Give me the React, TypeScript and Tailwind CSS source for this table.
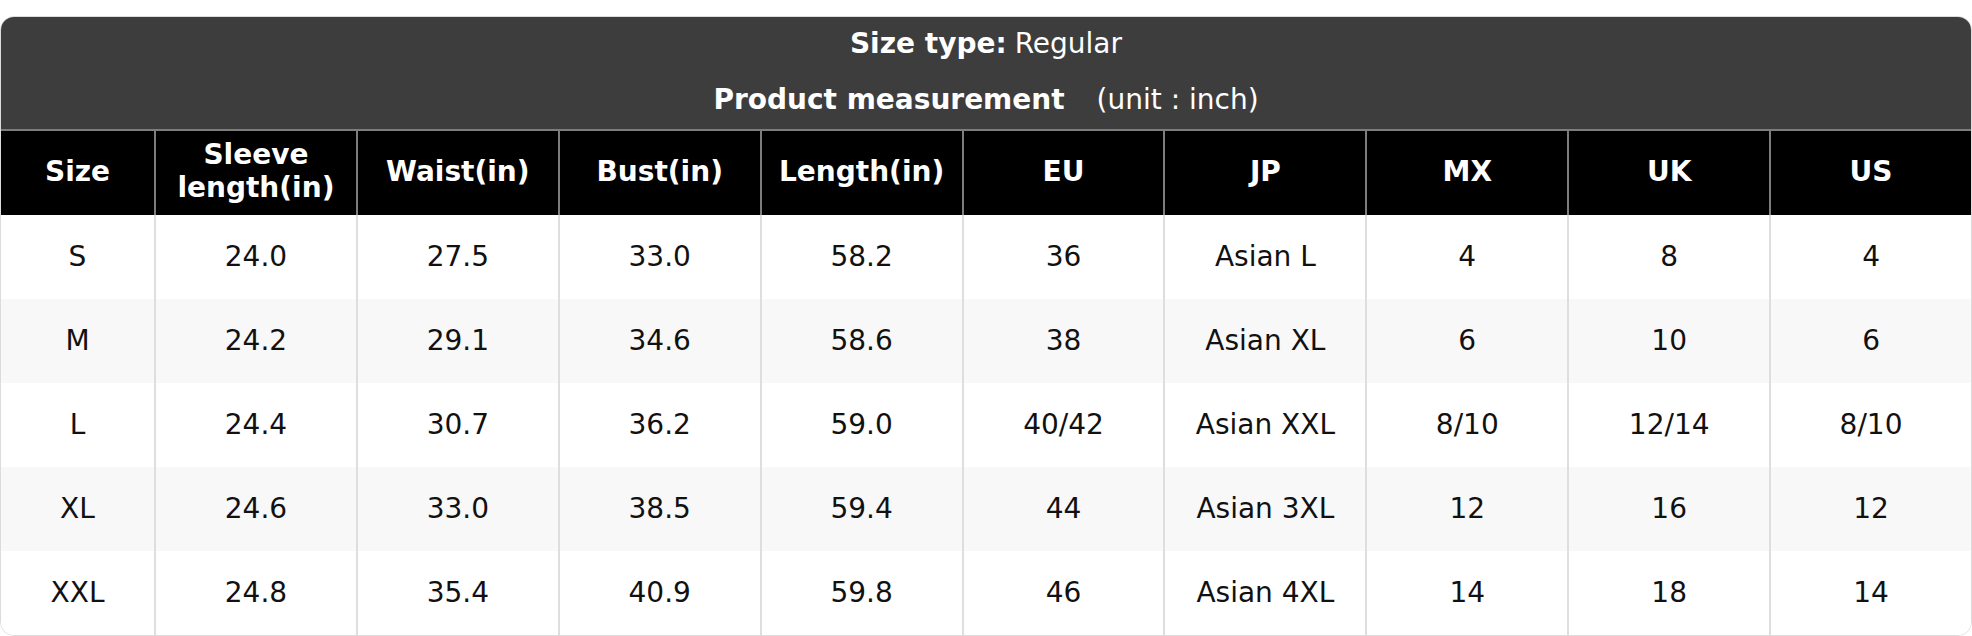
const columns = ['Size', 'Sleeve length(in)', 'Waist(in)', 'Bust(in)', 'Length(in)', 'EU', 'JP', 'MX', 'UK', 'US']

const rows: string[][] = [
  ['S', '24.0', '27.5', '33.0', '58.2', '36', 'Asian L', '4', '8', '4'],
  ['M', '24.2', '29.1', '34.6', '58.6', '38', 'Asian XL', '6', '10', '6'],
  ['L', '24.4', '30.7', '36.2', '59.0', '40/42', 'Asian XXL', '8/10', '12/14', '8/10'],
  ['XL', '24.6', '33.0', '38.5', '59.4', '44', 'Asian 3XL', '12', '16', '12'],
  ['XXL', '24.8', '35.4', '40.9', '59.8', '46', 'Asian 4XL', '14', '18', '14']
]

export default function App() {
  return (
    <div className="min-h-screen bg-white pt-4 font-['DejaVu_Sans',sans-serif]">
      <div className="rounded-[14px] border border-[#dcdcdc] overflow-hidden">
        {/* Title */}
        <div className="bg-[#3d3d3d] text-white text-[28px] h-[112px] flex flex-col items-center">
          <div className="h-[54px] flex items-center">
            <span className="font-bold">Size type:</span>
            <span className="ml-2">Regular</span>
          </div>
          <div className="h-[58px] flex items-center">
            <span className="font-bold">Product measurement</span>
            <span className="ml-8">(unit : inch)</span>
          </div>
        </div>

        {/* Column headers */}
        <div className="grid grid-cols-[153px_repeat(9,1fr)] bg-black text-white font-bold text-[28px] border-t-2 border-[#7d7d7d] h-[86px]">
          {columns.map((col, i) => (
            <div
              key={col}
              className={
                'flex items-center justify-center text-center leading-[33px] px-2 pb-1 ' +
                (i > 0 ? 'border-l-2 border-[#7d7d7d]' : '')
              }
            >
              {col}
            </div>
          ))}
        </div>

        {/* Body */}
        {rows.map((row, r) => (
          <div
            key={row[0]}
            className={
              'grid grid-cols-[153px_repeat(9,1fr)] h-[84px] text-[28px] text-[#111]' +
              (r % 2 === 1 ? ' bg-[#f8f8f8]' : ' bg-white')
            }
          >
            {row.map((cell, i) => (
              <div
                key={i}
                className={
                  'flex items-center justify-center ' + (i > 0 ? 'border-l-2 border-[#dedede]' : '')
                }
              >
                {cell}
              </div>
            ))}
          </div>
        ))}
      </div>
    </div>
  )
}
